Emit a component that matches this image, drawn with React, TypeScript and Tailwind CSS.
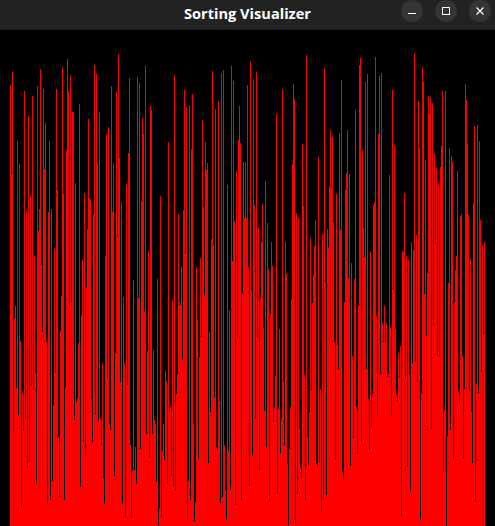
import React from 'react'

// top edge of each bar, as [x, y] in page pixels
const tops: number[][] = [
  [10,85],[11,175],[12,72],[13,432],[14,318],[15,306],[16,388],[17,141],[18,415],[19,164],[20,341],[21,507],[22,393],[23,431],[24,91],[25,419],[26,211],[27,468],[28,116],[29,462],[30,195],[31,386],[32,96],[33,390],[34,256],[35,373],[36,483],[37,86],[38,231],[39,209],[40,69],[41,265],[42,332],[43,89],[44,169],[45,123],[46,342],[47,504],[48,212],[49,141],[50,500],[51,209],[52,481],[53,405],[54,248],[55,373],[56,89],[57,190],[58,437],[59,497],[60,331],[61,296],[62,67],[63,194],[64,500],[65,387],[66,150],[67,59],[68,91],[69,307],[70,75],[71,303],[72,112],[73,112],[74,420],[75,183],[76,402],[77,398],[78,343],[79,104],[80,487],[81,315],[82,260],[83,442],[84,193],[85,456],[86,288],[87,229],[88,119],[89,198],[90,200],[91,399],[92,442],[93,214],[94,65],[95,415],[96,74],[97,163],[98,421],[99,112],[100,418],[101,445],[102,363],[103,478],[104,504],[105,256],[106,134],[107,379],[108,127],[109,424],[110,430],[111,86],[112,212],[113,163],[114,476],[115,353],[116,92],[117,237],[118,54],[119,158],[120,382],[121,202],[122,504],[123,297],[124,363],
  [125,518],[126,184],[127,385],[128,153],[129,78],[130,445],[131,519],[132,471],[133,280],[134,470],[135,447],[136,484],[137,77],[138,298],[139,83],[140,449],[141,201],[142,118],[143,134],[144,312],[145,66],[146,434],[147,351],[148,251],[149,457],[150,106],[151,110],[152,434],[153,350],[154,420],[155,424],[156,482],[157,279],[158,525],[159,508],[160,196],[161,517],[162,451],[163,424],[164,460],[165,371],[166,381],[167,484],[168,142],[169,412],[170,406],[171,476],[172,300],[173,487],[174,75],[175,491],[176,394],[177,374],[178,214],[179,302],[180,305],[181,267],[182,360],[183,210],[184,90],[185,254],[186,107],[187,520],[188,481],[189,105],[190,500],[191,149],[192,94],[193,424],[194,521],[195,502],[196,267],[197,320],[198,459],[199,357],[200,258],[201,337],[202,120],[203,207],[204,296],[205,142],[206,170],[207,163],[208,463],[209,332],[210,412],[211,239],[212,71],[213,245],[214,397],[215,109],[216,447],[217,451],[218,101],[219,401],[220,503],[221,73],[222,497],[223,70],[224,445],[225,490],[226,520],[227,185],[228,451],[229,310],[230,489],[231,66],[232,261],[233,81],[234,221],[235,505],[236,171],[237,339],[238,140],[239,106],[240,143],[241,500],[242,293],[243,162],[244,218],[245,162],[246,218],[247,85],[248,267],[249,487],
  [250,61],[251,290],[252,456],[253,79],[254,205],[255,419],[256,72],[257,338],[258,228],[259,471],[260,298],[261,242],[262,204],[263,328],[264,411],[265,181],[266,447],[267,223],[268,269],[269,501],[270,314],[271,242],[272,266],[273,423],[274,408],[275,376],[276,114],[277,494],[278,409],[279,329],[280,453],[281,418],[282,89],[283,382],[284,445],[285,242],[286,274],[287,464],[288,525],[289,449],[290,407],[291,299],[292,164],[293,84],[294,99],[295,523],[296,213],[297,494],[298,218],[299,429],[300,467],[301,479],[302,144],[303,206],[304,375],[305,500],[306,55],[307,437],[308,466],[309,412],[310,238],[311,391],[312,303],[313,275],[314,246],[315,220],[316,464],[317,467],[318,157],[319,463],[320,389],[321,512],[322,234],[323,500],[324,68],[325,282],[326,495],[327,229],[328,248],[329,186],[330,130],[331,188],[332,137],[333,222],[334,342],[335,460],[336,194],[337,345],[338,369],[339,133],[340,230],[341,80],[342,472],[343,480],[344,302],[345,190],[346,173],[347,130],[348,278],[349,174],[350,466],[351,263],[352,356],[353,439],[354,279],[355,110],[356,407],[357,455],[358,306],[359,65],[360,58],[361,442],[362,150],[363,228],[364,257],[365,82],[366,369],[367,74],[368,399],[369,450],[370,252],[371,427],[372,394],[373,205],[374,202],
  [375,57],[378,134],[379,76],[381,73],[389,175],[392,90],[394,146],[401,516],[402,251],[403,252],[404,193],[406,256],[407,467],[408,260],[410,491],[411,242],[413,250],[414,53],[416,235],[418,101],[419,148],[420,520],[422,67],[423,82],[425,160],[427,273],[428,96],[429,114],[430,97],[431,429],[432,103],[434,153],[435,244],[436,168],[438,183],[440,167],[441,146],[442,91],[443,472],[445,91],[446,526],[447,436],[448,283],[449,148],[450,429],[451,156],[452,162],[453,459],[455,270],[456,256],[457,171],[460,216],[461,214],[463,459],[465,84],[466,100],[467,144],[468,215],[470,259],[472,463],[473,203],[474,126],[475,502],[477,125],[479,141],[480,220],[482,245],[484,242],
]

const topByX = new Map(tops.map(([x, y]) => [x, y]))

// columns not read off the picture: short bars, fixed per column
const bars = Array.from({ length: 475 }, (_, i) => {
  const x = i + 10
  const top = topByX.get(x) ?? 290 + ((x * x * 37 + x * 11) % 131)
  return { x, height: 526 - top }
})

export default function App() {
  return (
    <div className="flex h-[526px] w-[495px] flex-col overflow-hidden bg-black">
      <header className="grid h-[30px] shrink-0 grid-cols-[1fr_auto_1fr] border-b border-[#1a1a1a] bg-[#222222] pb-[8px]">
        <div />
        <h1 className="self-center pt-[5px] font-['Open_Sans',sans-serif] text-[14.6px] font-bold leading-none text-white">
          Sorting Visualizer
        </h1>
        <div className="flex justify-end gap-3 pr-1">
          <button className="flex h-[22px] w-[22px] items-center justify-center rounded-full bg-[#353535]">
            <svg width="8" height="8" viewBox="0 0 8 8"><path d="M0 6.5H8" stroke="#fff" strokeWidth="1" /></svg>
          </button>
          <button className="flex h-[22px] w-[22px] items-center justify-center rounded-full bg-[#353535]">
            <svg width="8" height="8" viewBox="0 0 8 8"><rect x="0.5" y="0.5" width="7" height="7" fill="none" stroke="#fff" strokeWidth="1" /></svg>
          </button>
          <button className="flex h-[22px] w-[22px] items-center justify-center rounded-full bg-[#353535]">
            <svg width="8" height="8" viewBox="0 0 8 8"><path d="M0.5 0.5L7.5 7.5M7.5 0.5L0.5 7.5" stroke="#fff" strokeWidth="1.2" /></svg>
          </button>
        </div>
      </header>
      <main className="flex min-h-0 flex-1 items-end px-[10px]">
        {bars.map((bar) => (
          <div key={bar.x} className="w-px shrink-0 bg-[#ff0000]" style={{ height: bar.height }} />
        ))}
      </main>
    </div>
  )
}
